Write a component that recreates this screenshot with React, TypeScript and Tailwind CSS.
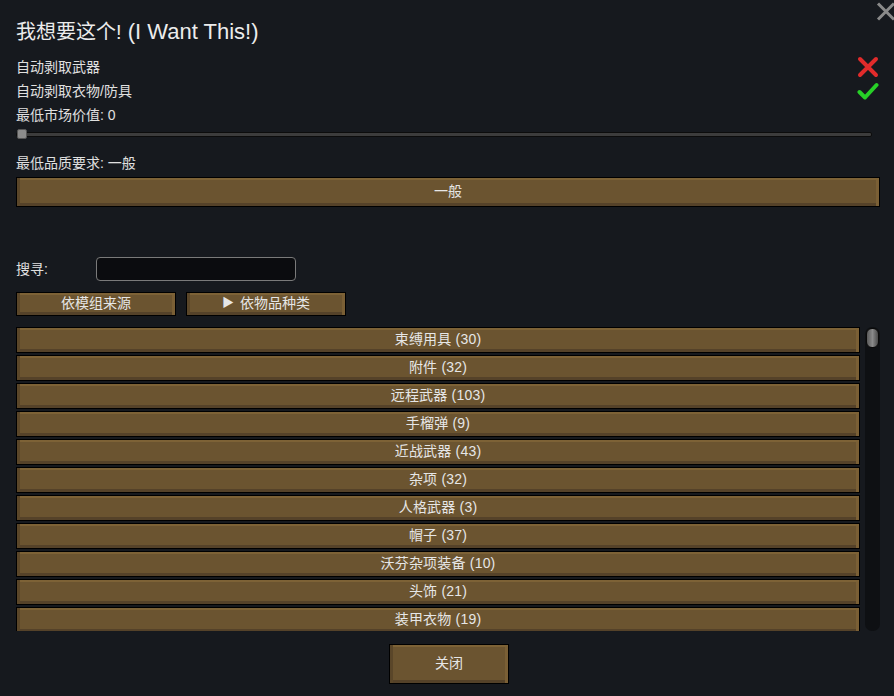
import React from "react";

const btn =
  "border border-black bg-[#6b5430] shadow-[inset_3px_0_0_#5a4629,inset_0_2px_0_#7d6236,inset_-3px_0_0_#7a5f35,inset_0_-3px_0_#554229] text-[#e6e6e6] text-[14px] flex items-center justify-center pb-[2px]";

const rows = [
  "束缚用具 (30)",
  "附件 (32)",
  "远程武器 (103)",
  "手榴弹 (9)",
  "近战武器 (43)",
  "杂项 (32)",
  "人格武器 (3)",
  "帽子 (37)",
  "沃芬杂项装备 (10)",
  "头饰 (21)",
  "装甲衣物 (19)",
];

function RedX() {
  return (
    <svg width="22" height="22" viewBox="0 0 22 22">
      <path d="M3 3 L19 19 M19 3 L3 19" stroke="#e12b2b" strokeWidth="4" strokeLinecap="round" />
    </svg>
  );
}

function Check() {
  return (
    <svg width="22" height="22" viewBox="0 0 22 22">
      <path d="M2.5 12 L8 17.5 L19.5 5" stroke="#27d027" strokeWidth="4" strokeLinecap="round" strokeLinejoin="round" fill="none" />
    </svg>
  );
}

export default function App() {
  return (
    <div
      className="relative w-[894px] h-[696px] bg-[#16191e] text-[#e0e0e0] overflow-hidden"
      style={{ fontFamily: '"Liberation Sans", "Noto Sans CJK SC", sans-serif' }}
    >
      <svg className="absolute left-[876px] top-[2px]" width="20" height="19" viewBox="0 0 20 19">
        <path d="M2 1.5 L18 17.5 M18 1.5 L2 17.5" stroke="#8a8a8a" strokeWidth="3" />
      </svg>

      <div className="flex flex-col pl-[16px] pr-[14px]">
        <div className="mt-[20px] h-[24px] leading-[24px] text-[#ececec] whitespace-nowrap flex items-baseline">
          <span className="text-[20px]">我想要这个!</span>
          <span className="text-[22px]">&nbsp;(I Want This!)</span>
        </div>

        <div className="mt-[11px] flex flex-col text-[14px]">
          <div className="h-[24px] flex items-center justify-between">
            <span>自动剥取武器</span>
            <span className="mr-[1px] flex">
              <RedX />
            </span>
          </div>
          <div className="h-[24px] flex items-center justify-between">
            <span>自动剥取衣物/防具</span>
            <span className="mr-[1px] flex">
              <Check />
            </span>
          </div>
          <div className="h-[24px] flex items-center">最低市场价值: 0</div>
        </div>

        <div className="relative h-[12px] mt-[1px] mr-[8px] flex items-center">
          <div className="w-full h-[5px] bg-[#3c3c3c] border border-[#0c0c0c] rounded-[2px]" />
          <div className="absolute left-[1px] top-[1px] w-[10px] h-[10px] bg-[#8c8c8c] border border-[#555] rounded-[2px]" />
        </div>

        <div className="mt-[11px] h-[24px] flex items-center text-[14px]">最低品质要求: 一般</div>

        <div className={`${btn} mt-[2px] h-[30px]`}>一般</div>

        <div className="mt-[50px] flex items-center h-[24px] text-[14px]">
          <span className="w-[80px]">搜寻:</span>
          <div className="w-[200px] h-[24px] rounded-[4px] border border-[#7a7a7a] bg-[#0b0c0f]" />
        </div>

        <div className="mt-[11px] flex gap-[10px]">
          <div className={`${btn} w-[160px] h-[24px]`}>依模组来源</div>
          <div className={`${btn} w-[160px] h-[24px] gap-[6px]`}>
            <span className="text-[12px]">▶</span>
            <span>依物品种类</span>
          </div>
        </div>

        <div className="mt-[11px] h-[304px] flex gap-[5px]">
          <div className="w-[844px] h-full overflow-hidden flex flex-col gap-[2px]">
            {rows.map((r) => (
              <div key={r} className={`${btn} h-[26px] shrink-0 tracking-[0.2px]`}>
                {r}
              </div>
            ))}
          </div>
          <div className="w-[15px] h-full rounded-[7px] bg-[#0e1013] p-[1px]">
            <div className="h-[20px] w-full rounded-[6px] border border-[#0a0a0a] bg-gradient-to-r from-[#5a5a5a] via-[#8a8a8a] to-[#4a4a4a]" />
          </div>
        </div>

        <div className={`${btn} mt-[13px] mx-auto w-[120px] h-[40px] relative left-[1px]`}>关闭</div>
      </div>
    </div>
  );
}
